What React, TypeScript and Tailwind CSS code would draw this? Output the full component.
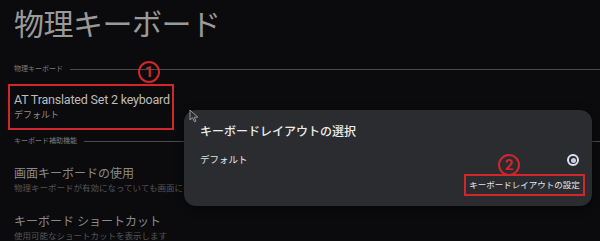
import React from 'react'

const font = { fontFamily: 'Roboto, "Noto Sans CJK JP", sans-serif' }

function SectionLabel({ label }: { label: string }) {
  return (
    <div className="flex items-center h-[10px]">
      <span className="text-[7px] leading-none text-[#7a7a7a] whitespace-nowrap">{label}</span>
      <div className="flex-1 h-px bg-[#4a4a4c] ml-[7px]" />
    </div>
  )
}

function Circled({ n }: { n: string }) {
  return (
    <div className="w-[22px] h-[22px] rounded-full border-2 border-[#d1262b] flex items-center justify-center text-[#d1262b] text-[15px] font-bold leading-none">
      {n}
    </div>
  )
}

export default function App() {
  return (
    <div className="relative w-[600px] h-[241px] overflow-hidden bg-[#0b0b0d]" style={font}>
      {/* Page */}
      <div className="pl-[14px] pt-[8px]">
        <h1 className="text-[30px] leading-[34px] text-[#9a9a9a] tracking-[-0.5px]">物理キーボード</h1>

        <div className="mt-[22px]">
          <SectionLabel label="物理キーボード" />
        </div>

        <div className="mt-[10px] -ml-[6px] w-[166px] h-[46px] border-2 border-[#d1262b] pl-[4px] pt-[6px]">
          <div className="text-[12.5px] leading-[16px] text-[#bdbdbd] tracking-[-0.2px] whitespace-nowrap">AT Translated Set 2 keyboard</div>
          <div className="text-[9px] leading-[12px] mt-[1px] text-[#8e8e8e]">デフォルト</div>
        </div>

        <div className="mt-[6px]">
          <SectionLabel label="キーボード補助機能" />
        </div>

        <div className="mt-[20px]">
          <div className="text-[12px] leading-[16px] text-[#8a8a8a] whitespace-nowrap">画面キーボードの使用</div>
          <div className="text-[8.5px] leading-[11px] mt-[1px] text-[#555] whitespace-nowrap">物理キーボードが有効になっていても画面にキーボードを表示します</div>
        </div>

        <div className="mt-[20px]">
          <div className="text-[12px] leading-[16px] text-[#8a8a8a] whitespace-nowrap">キーボード ショートカット</div>
          <div className="text-[8.5px] leading-[11px] mt-[1px] text-[#555] whitespace-nowrap">使用可能なショートカットを表示します</div>
        </div>
      </div>

      {/* Annotation ① */}
      <div className="absolute left-[138px] top-[61px]">
        <Circled n="1" />
      </div>

      {/* Dialog */}
      <div className="absolute left-[184px] top-[110px] w-[408px] h-[96px] rounded-[12px] bg-[#2b2c30] shadow-[0_2px_8px_rgba(0,0,0,0.6)] pl-[16px] pr-[13px] pt-[14px]">
        <div className="text-[12px] leading-[16px] font-medium text-[#ececec] whitespace-nowrap">キーボードレイアウトの選択</div>
        <div className="flex items-center justify-between mt-[13px] h-[14px]">
          <span className="text-[9.5px] leading-none text-[#e4e4e4]">デフォルト</span>
          <div className="w-[12px] h-[12px] rounded-full border-2 border-[#dfe0f2] flex items-center justify-center">
            <div className="w-[5px] h-[5px] rounded-full bg-[#c9cbea]" />
          </div>
        </div>
        <div className="flex justify-end mt-[7px] -mr-[6px]">
          <div className="w-[121px] h-[22px] border-2 border-[#d1262b] flex items-center justify-center">
            <span className="text-[8.5px] leading-none text-[#e6e6e6] whitespace-nowrap">キーボードレイアウトの設定</span>
          </div>
        </div>
      </div>

      {/* Annotation ② */}
      <div className="absolute left-[498px] top-[154px]">
        <Circled n="2" />
      </div>

      {/* Mouse cursor */}
      <svg className="absolute left-[189px] top-[109px]" width="11" height="14" viewBox="0 0 11 14">
        <path d="M1 1 L1 11 L3.5 8.8 L5.5 12.8 L7 12 L5.2 8.2 L8.8 8.2 Z" fill="none" stroke="#9a9a9a" strokeWidth="1" />
      </svg>
    </div>
  )
}
